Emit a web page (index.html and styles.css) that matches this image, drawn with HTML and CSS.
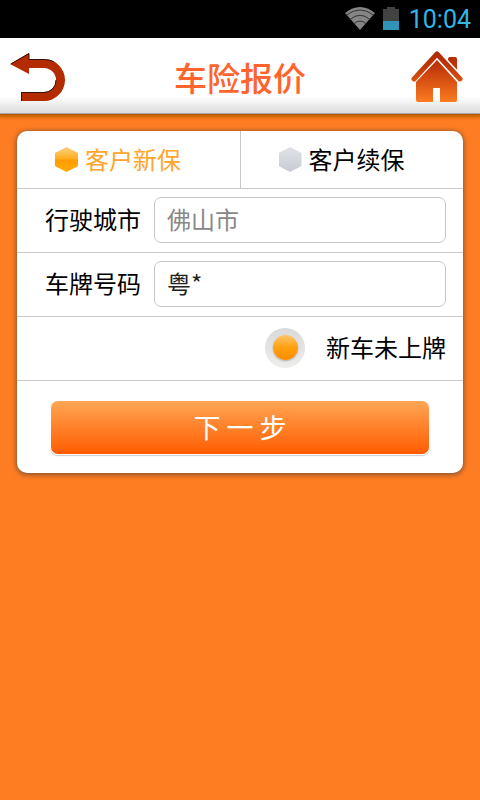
FILE: index.html
```html
<!DOCTYPE html>
<html lang="zh-CN">
<head>
<meta charset="utf-8">
<meta name="viewport" content="width=device-width, initial-scale=1">
<title>车险报价</title>
<link rel="stylesheet" href="styles.css">
</head>
<body>
<div class="status">
  <svg class="wifi" width="30" height="24" viewBox="0 0 30 24" aria-hidden="true">
    <path d="M0 6Q15-6 30 6L15 23Z" fill="#858585"/>
    <path d="M1.500 8Q15-2 28.500 8M5 12.500Q15 4 25 12.500M8.500 17Q15 11 21.500 17" fill="none" stroke="#333" stroke-width="1"/>
  </svg>
  <svg class="battery" width="16" height="24" viewBox="0 0 16 24" aria-hidden="true">
    <path d="M0 2H4V0H12V2H16V14H0Z" fill="#424242"/>
    <path d="M0 14H16V23H0Z" fill="#3094b8"/>
  </svg>
  <time class="clock">10:04</time>
</div>
<header class="header">
  <a class="nav" href="#back" aria-label="返回">
    <svg width="56" height="52" viewBox="0 0 56 52">
      <path d="M0 13L19 2V8H34A21 21 0 0 1 34 50H11V41H34A12 12 0 0 0 34 17H19V23Z" fill="#b52b00"/>
      <path d="M1 13L19 2.500V8.500H34Q40 8.500 44 11M46 29A12 12 0 0 1 34 41.500H11.500V50" fill="none" stroke="#351009"/>
    </svg>
  </a>
  <h1 class="title">车险报价</h1>
  <a class="nav" href="#home" aria-label="首页">
    <svg width="52" height="52" viewBox="0 0 52 52">
      <defs>
        <linearGradient id="roof" gradientUnits="userSpaceOnUse" x1="0" y1="0" x2="0" y2="52">
          <stop offset="0" stop-color="#ad2700"/>
          <stop offset="0.300" stop-color="#bf3708"/>
          <stop offset="1" stop-color="#ff7d22"/>
        </linearGradient>
      </defs>
      <path d="M37 8Q37 6 39 6H44Q46 6 46 8V20L37 11Z" fill="url(#roof)"/>
      <path d="M26 3L49 28" fill="none" stroke="#fff" stroke-width="8"/>
      <path d="M3 28L26 3L49 28" fill="none" stroke="url(#roof)" stroke-width="5" stroke-linecap="round" stroke-linejoin="round"/>
      <path d="M26 9L46 31V49Q46 51 44 51H29V37H22V51H7Q5 51 5 49V31Z" fill="url(#roof)"/>
    </svg>
  </a>
</header>
<main class="main">
  <form class="card">
    <div class="tabs">
      <label class="tab"><input class="hex" type="radio" name="kind" checked><span>客户新保</span></label>
      <label class="tab"><input class="hex" type="radio" name="kind"><span>客户续保</span></label>
    </div>
    <div class="row">
      <label for="city">行驶城市</label>
      <input class="field" id="city" type="text" placeholder="佛山市">
    </div>
    <div class="row">
      <label for="plate">车牌号码</label>
      <input class="field" id="plate" type="text" value="粤*">
    </div>
    <div class="row row-end">
      <input class="check" id="unplated" type="checkbox" checked>
      <label for="unplated">新车未上牌</label>
    </div>
    <div class="actions">
      <button class="next" type="button">下 一 步</button>
    </div>
  </form>
</main>
</body>
</html>
```
FILE: styles.css
```css
* { box-sizing: border-box; }

body {
  margin: 0;
  min-height: 100vh;
  background: #ff7d22;
  color: #000;
  font-family: "Noto Sans CJK SC", sans-serif;
  font-size: 24px;
  line-height: 32px;
}

.status {
  display: flex;
  align-items: center;
  justify-content: flex-end;
  height: 38px;
  padding-right: 9px;
  background: #000;
}
.battery { margin: 0 10px 0 8px; }
.clock { color: #33b5e5; font-family: Roboto, sans-serif; font-size: 25px; padding-top: 2px; }

.header {
  display: flex;
  align-items: center;
  justify-content: space-between;
  height: 76px;
  padding: 2px 17px 0 10px;
  background: linear-gradient(#fff 78%, #dcdcdc);
  border-bottom: 1px solid #aaa;
  box-shadow: 0 1px 0 #b35600, 0 3px 0 #cf6a08, 0 4px 3px #d9690f;
}
.nav { display: flex; width: 63px; }
.nav:last-child { justify-content: flex-end; width: 56px; }
.title { margin: 0; color: #ff642c; font-size: 33px; font-weight: 500; line-height: 48px; }

.main { padding: 17px; }
.card {
  overflow: hidden;
  border-radius: 10px;
  background: #fff;
  box-shadow: 0 1px 5px 1px #8b5430;
}

.tabs { display: grid; grid-template-columns: 1fr 1fr; height: 57px; }
.tab { display: flex; align-items: center; justify-content: center; gap: 7px; padding-right: 21px; }
.tab span { padding-bottom: 2px; }
.tab + .tab { border-left: 1px solid #c8c8c8; }
.tab:has(:checked) { color: #ffa42c; }

.hex {
  appearance: none;
  width: 23px;
  height: 25px;
  margin: 0;
  background: linear-gradient(#e0e2e6, #c8ccd2);
  clip-path: polygon(50% 0, 100% 24%, 100% 76%, 50% 100%, 0 76%, 0 24%);
}
.hex:checked { background: linear-gradient(#ffd080, #ffad1c 48%, #ff9c00 52%, #ffab00); }

.row {
  display: flex;
  align-items: center;
  gap: 13px;
  height: 64px;
  padding: 0 17px 2px 28px;
  border-top: 1px solid #c8c8c8;
}
.row label { padding-bottom: 2px; }
.row-end { justify-content: flex-end; gap: 21px; }

.field {
  flex: 1;
  min-width: 0;
  height: 46px;
  padding: 0 12px 2px;
  border: 1px solid #c4c4c4;
  border-radius: 7px;
  background: #fff;
  color: #222;
  font: inherit;
}
.field::placeholder { color: #888; opacity: 1; }

.check {
  appearance: none;
  display: grid;
  place-items: center;
  width: 40px;
  height: 40px;
  margin: 0;
  border-radius: 50%;
  background: linear-gradient(#d9d9d9, #eeeeec);
}
.check:checked::before {
  content: "";
  width: 25px;
  height: 25px;
  border-radius: 50%;
  background: linear-gradient(#ffc56b, #ffa010 50%, #ff8c00);
  box-shadow: 0 1px 2px #aaa;
}

.actions { padding: 20px 34px 19px; border-top: 1px solid #c8c8c8; }
.next {
  display: block;
  width: 100%;
  height: 53px;
  padding: 0 0 2px;
  border: 0;
  border-radius: 7px;
  background: linear-gradient(#ffa654, #ff5c00);
  box-shadow: 0 0 0 1px #fff, 0 1px 1px 1px #ccc;
  color: #fff;
  font: inherit;
  font-size: 27px;
}
```
